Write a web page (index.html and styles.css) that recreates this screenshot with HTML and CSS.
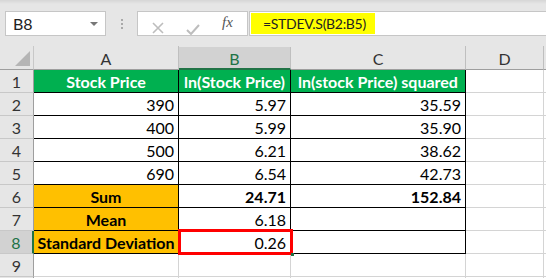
FILE: index.html
```html
<!DOCTYPE html>
<html lang="en">
<head>
  <meta charset="UTF-8" />
  <title>STDEV.S</title>
  <link rel="stylesheet" href="styles.css">
</head>
<body>
  <div class="topbar">
    <div class="name-box">B8<span class="caret"></span></div>
    <div class="grip"><i></i><i></i><i></i></div>
    <div class="fx-tools">
      <span class="tool-x">
        <svg width="12" height="12" viewBox="0 0 12 12"><path d="M1 1 L11 11 M11 1 L1 11" stroke="#bdbdbd" stroke-width="1.6" fill="none"/></svg>
      </span>
      <span class="tool-ok">
        <svg width="14" height="11" viewBox="0 0 14 11"><path d="M1 6 L5 10 L13 1" stroke="#bdbdbd" stroke-width="2" fill="none"/></svg>
      </span>
      <span class="tool-fx">fx</span>
    </div>
    <div class="formula"><span class="formula-text">=STDEV.S(B2:B5)</span></div>
  </div>

  <div class="sheet">
    <div class="hd corner"><span class="tri"></span></div>
    <div class="hd">A</div>
    <div class="hd sel">B</div>
    <div class="hd">C</div>
    <div class="hd">D</div>
    <div class="hd last"></div>

    <div class="rh">1</div>
    <div class="c g">Stock Price</div>
    <div class="c g">ln(Stock Price)</div>
    <div class="c g">ln(stock Price) squared</div>
    <div class="c"></div>
    <div class="c last"></div>

    <div class="rh">2</div>
    <div class="c t n">390</div>
    <div class="c t n">5.97</div>
    <div class="c t n">35.59</div>
    <div class="c"></div>
    <div class="c last"></div>

    <div class="rh">3</div>
    <div class="c t n">400</div>
    <div class="c t n">5.99</div>
    <div class="c t n">35.90</div>
    <div class="c"></div>
    <div class="c last"></div>

    <div class="rh">4</div>
    <div class="c t n">500</div>
    <div class="c t n">6.21</div>
    <div class="c t n">38.62</div>
    <div class="c"></div>
    <div class="c last"></div>

    <div class="rh">5</div>
    <div class="c t n">690</div>
    <div class="c t n">6.54</div>
    <div class="c t n">42.73</div>
    <div class="c"></div>
    <div class="c last"></div>

    <div class="rh">6</div>
    <div class="c t o">Sum</div>
    <div class="c t n b">24.71</div>
    <div class="c t n b">152.84</div>
    <div class="c"></div>
    <div class="c last"></div>

    <div class="rh">7</div>
    <div class="c t o">Mean</div>
    <div class="c t n">6.18</div>
    <div class="c t"></div>
    <div class="c"></div>
    <div class="c last"></div>

    <div class="rh sel">8</div>
    <div class="c t o">Standard Deviation</div>
    <div class="c t n active">0.26</div>
    <div class="c t"></div>
    <div class="c"></div>
    <div class="c last"></div>

    <div class="rh">9</div>
    <div class="c"></div>
    <div class="c"></div>
    <div class="c"></div>
    <div class="c"></div>
    <div class="c last"></div>

    <div class="rh"></div>
    <div class="c"></div>
    <div class="c"></div>
    <div class="c"></div>
    <div class="c"></div>
    <div class="c last"></div>
  </div>
</body>
</html>
```

FILE: styles.css
```css
body {
  margin: 0;
  padding: 0;
  width: 546px;
  height: 278px;
  overflow: hidden;
  background: #e6e6e6;
  font-family: Lato, "Liberation Sans", sans-serif;
  font-size: 16px;
  color: #000;
}
.topbar {
  height: 46px;
  box-sizing: border-box;
  padding: 11px 0 0 5px;
  display: flex;
  align-items: flex-start;
  background: linear-gradient(#d6d6d6, #e6e6e6 4px);
}
.name-box {
  width: 101px;
  height: 25px;
  box-sizing: border-box;
  background: #fff;
  border: 1px solid #c6c6c6;
  padding-left: 7px;
  display: flex;
  align-items: center;
  color: #222;
  position: relative;
}
.caret {
  position: absolute;
  right: 7px;
  top: 10px;
  border-left: 4px solid transparent;
  border-right: 4px solid transparent;
  border-top: 4px solid #777;
}
.grip {
  width: 31px;
  height: 25px;
  display: flex;
  flex-direction: column;
  align-items: center;
  justify-content: center;
  gap: 2px;
}
.grip i {
  width: 2px;
  height: 2px;
  background: #a9a9a9;
}
.fx-tools {
  width: 111px;
  height: 25px;
  box-sizing: border-box;
  background: #fff;
  border: 1px solid #c6c6c6;
  display: flex;
  align-items: center;
  position: relative;
}
.tool-x { position: absolute; left: 14px; top: 6px; }
.tool-ok { position: absolute; left: 48px; top: 7px; }
.tool-fx {
  position: absolute;
  left: 84px;
  top: 2px;
  font-family: "Liberation Serif", serif;
  font-style: italic;
  font-size: 15px;
  color: #555;
}
.formula {
  flex: 1;
  height: 25px;
  box-sizing: border-box;
  background: #fff;
  border: 1px solid #c6c6c6;
  border-right: none;
  margin-left: 1px;
  padding: 1px;
  display: flex;
}
.formula-text {
  background: #ffff00;
  width: 124px;
  box-sizing: border-box;
  padding-left: 12px;
  display: flex;
  align-items: center;
  color: #222;
  font-size: 14px;
  letter-spacing: -0.3px;
  white-space: nowrap;
}
.sheet {
  display: grid;
  grid-template-columns: 34px 145px 112px 175px 78px 1fr;
  grid-template-rows: 24px repeat(10, 23px);
}
.hd {
  box-sizing: border-box;
  border-right: 1px solid #bfbfbf;
  border-bottom: 1px solid #9e9e9e;
  display: flex;
  align-items: center;
  justify-content: center;
  color: #333;
  padding-top: 1px;
}
.hd.corner {
  position: relative;
  border-right-color: #c8c8c8;
}
.tri {
  position: absolute;
  right: 3px;
  bottom: 3px;
  width: 0;
  height: 0;
  border-left: 15px solid transparent;
  border-bottom: 15px solid #b5b5b5;
}
.hd.sel {
  background: #d2d2d2;
  color: #217346;
  border-bottom: 2px solid #217346;
  margin-top: 1px;
}
.hd.last, .c.last { border-right: none; }
.rh {
  box-sizing: border-box;
  border-right: 1px solid #9e9e9e;
  border-bottom: 1px solid #c8c8c8;
  display: flex;
  align-items: center;
  justify-content: center;
  color: #333;
}
.rh.sel {
  background: #d2d2d2;
  color: #217346;
  border-right: 2px solid #217346;
}
.c {
  box-sizing: border-box;
  background: #fff;
  border-right: 1px solid #d4d4d4;
  border-bottom: 1px solid #d4d4d4;
  display: flex;
  align-items: center;
  justify-content: center;
  padding: 0 4px;
  white-space: nowrap;
}
.c.t {
  border-right-color: #000;
  border-bottom-color: #000;
}
.c.g {
  background: #00b050;
  color: #fff;
  font-weight: bold;
  border-right-color: #000;
  border-bottom-color: #000;
}
.c.o {
  background: #ffc000;
  font-weight: bold;
}
.c.n { justify-content: flex-end; }
.c.b { font-weight: bold; }
.c.active { position: relative; }
.c.active::after {
  content: "";
  position: absolute;
  top: -2px;
  left: -1px;
  right: -3px;
  bottom: -2px;
  border: 3px solid #ff0000;
}
.c.active::before {
  content: "";
  position: absolute;
  right: -4px;
  bottom: -3px;
  width: 3px;
  height: 3px;
  background: #217346;
  z-index: 1;
}
```
